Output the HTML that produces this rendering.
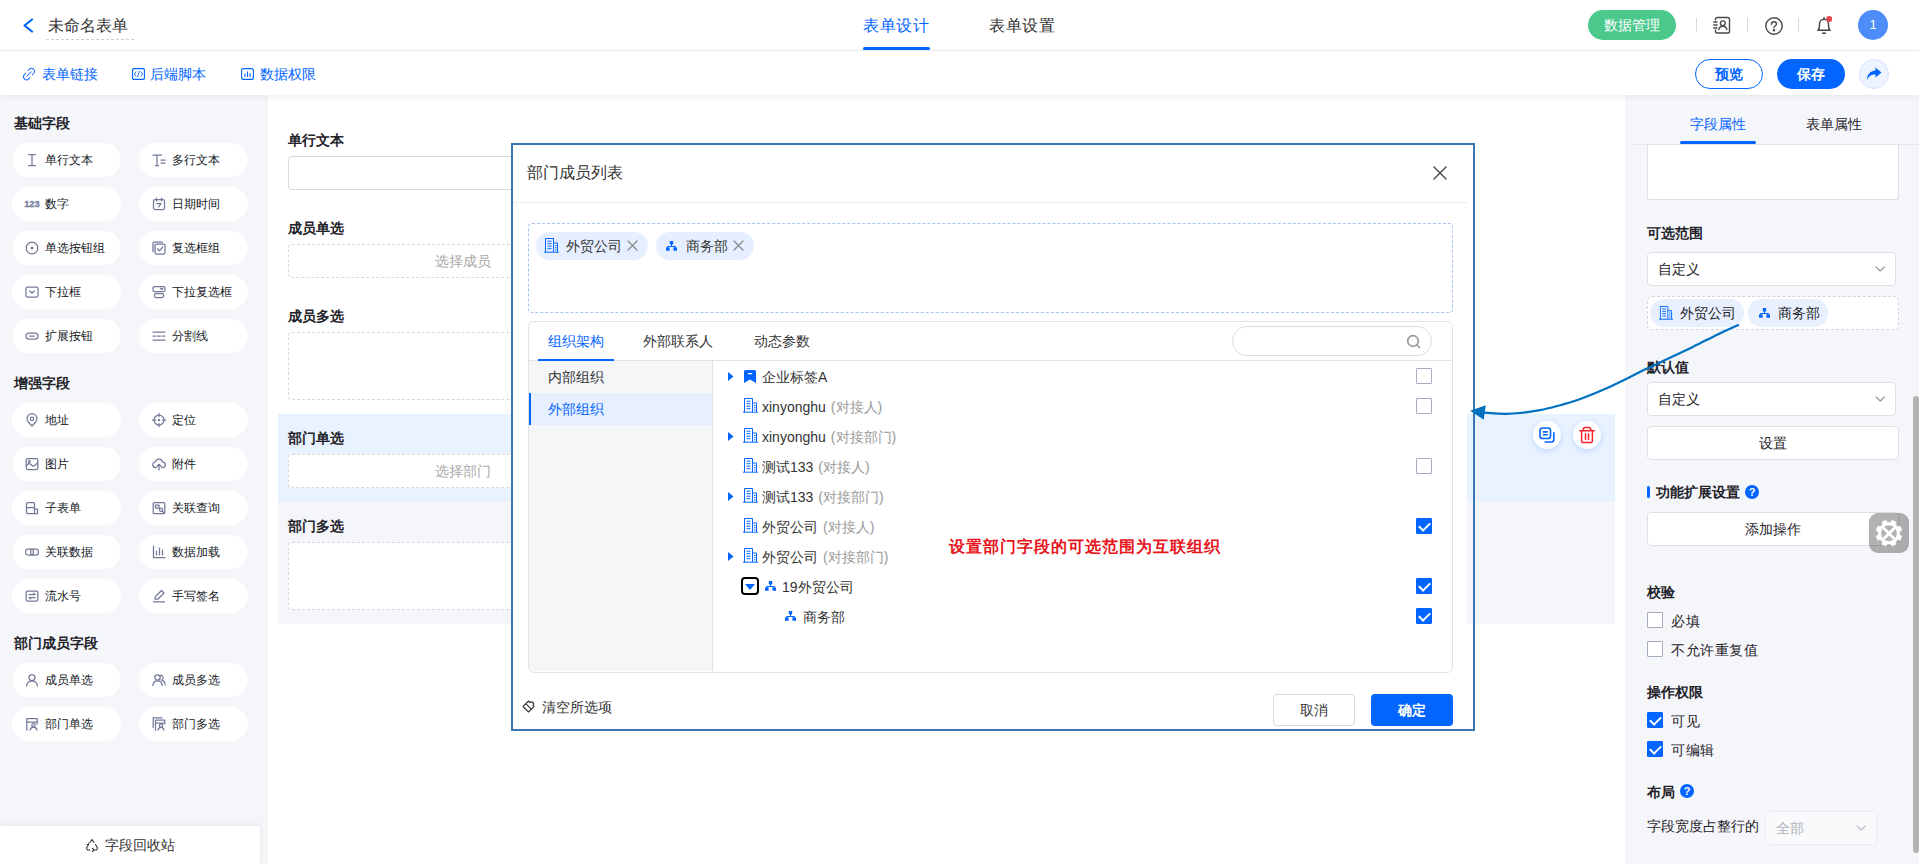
<!DOCTYPE html>
<html lang="zh">
<head>
<meta charset="utf-8">
<title>form designer</title>
<style>
*{box-sizing:border-box;margin:0;padding:0}
html,body{width:1919px;height:864px;overflow:hidden;background:#fff}
body{font-family:"Liberation Sans",sans-serif;font-size:14px;color:#333;position:relative}
.abs{position:absolute}
.t{position:absolute;white-space:nowrap;line-height:20px;height:20px}
.b{font-weight:bold}
.blue{color:#0265ff}
svg{position:absolute;overflow:visible}
/* top bars */
#top{left:0;top:0;width:1919px;height:51px;background:#fff;border-bottom:1px solid #ebecee}
#sub{left:0;top:51px;width:1919px;height:44px;background:#fff;box-shadow:0 2px 6px rgba(0,0,0,.06);z-index:3}
/* sidebar */
#side{left:0;top:95px;width:268px;height:769px;background:#f5f6fa}
.pill{position:absolute;width:109px;height:34px;border-radius:17px;background:#fff;font-size:12px;line-height:34px;padding-left:33px;color:#15181d;white-space:nowrap}
.pill svg{left:13px;top:10px;width:14px;height:14px;stroke:#737999;fill:none;stroke-width:1.25}
.sec{position:absolute;left:14px;font-weight:bold;font-size:14px;color:#1f2329;line-height:20px;white-space:nowrap}
#recycle{left:0;top:826px;width:260px;height:38px;background:#fff;box-shadow:0 -1px 6px rgba(0,0,0,.08)}
/* center */
#center{left:268px;top:95px;width:1357px;height:769px;background:#fff}
.flabel{position:absolute;left:288px;font-weight:bold;font-size:14px;line-height:20px;color:#1f2329;white-space:nowrap}
.fbox{position:absolute;left:288px;width:1317px;border:1px dashed #d9d9d9;border-radius:4px;background:#fff}
/* right */
#right{left:1625px;top:95px;width:294px;height:769px;background:#f5f6fa}
.rlabel{position:absolute;left:1647px;font-weight:bold;font-size:14px;line-height:20px;color:#1f2329;white-space:nowrap}
.rsel{position:absolute;background:#fff;border:1px solid #dcdfe6;border-radius:4px}
.cb{position:absolute;width:16px;height:16px;border:1px solid #a6abbd;border-radius:1px;background:#fff}
.cb.on{background:#0265ff;border-color:#0265ff}
.cb.on:after{content:"";position:absolute;left:4px;top:1px;width:5px;height:9px;border:solid #fff;border-width:0 2px 2px 0;transform:rotate(45deg)}
/* modal */
#modal{left:512px;top:144px;width:955px;height:586px;background:#fff;z-index:10}
#anno{left:511px;top:143px;width:964px;height:588px;border:2px solid #3b76b3;z-index:12}
.z11{z-index:11}
.row{position:absolute;font-size:14px;line-height:20px;height:20px;white-space:nowrap;color:#333}
.gray{color:#999}
.j{display:inline-block;white-space:nowrap;text-align:justify;text-align-last:justify}
</style>
</head>
<body>
<div id="top" class="abs">
  <svg style="left:22px;top:18px" width="12" height="15" viewBox="0 0 12 15"><path d="M10 1.500 L2.500 7.500 L10 13.500" fill="none" stroke="#0265ff" stroke-width="2.2" stroke-linecap="round" stroke-linejoin="round"/></svg>
  <div class="t" style="left:48px;top:16px;font-size:16px;color:#333"><span class="j" style="width:80px">未命名表单</span></div>
  <div class="abs" style="left:46px;top:39px;width:88px;height:0;border-top:1px dashed #d0d0d0"></div>
  <div class="t blue" style="left:863px;top:15px;font-size:16.4px"><span class="j" style="width:65.6px">表单设计</span></div>
  <div class="abs" style="left:863px;top:47px;width:67px;height:3px;border-radius:2px;background:#0265ff"></div>
  <div class="t" style="left:989px;top:15px;font-size:16.4px;color:#333"><span class="j" style="width:65.6px">表单设置</span></div>
  <div class="abs" style="left:1588px;top:10px;width:88px;height:30px;border-radius:15px;background:#4bc98d;color:#fff;font-size:14px;line-height:30px;text-align:center"><span class="j" style="width:56px">数据管理</span></div>
  <div class="abs" style="left:1696px;top:18px;width:1px;height:14px;background:#d8d8d8"></div>
  <div class="abs" style="left:1747px;top:18px;width:1px;height:14px;background:#d8d8d8"></div>
  <div class="abs" style="left:1798px;top:18px;width:1px;height:14px;background:#d8d8d8"></div>
  <!-- contacts icon -->
  <svg style="left:1713px;top:16px" width="18" height="18" viewBox="0 0 18 18" fill="none" stroke="#4a4a4a" stroke-width="1.400" stroke-linecap="round"><rect x="2.500" y="1.500" width="14" height="15.500" rx="1.800"/><circle cx="9.800" cy="7.300" r="2.400"/><path d="M5.800 13.500c.4-2.200 1.900-3.300 4-3.300s3.600 1.100 4 3.300"/><path d="M.8 6h3M.8 9h3M.8 12h3" stroke="#fff" stroke-width="3.200"/><path d="M.8 6h3.200M.8 9h3.200M.8 12h3.200"/></svg>
  <!-- help -->
  <svg style="left:1765px;top:17px" width="18" height="18" viewBox="0 0 18 18" fill="none" stroke="#4a4a4a" stroke-width="1.400" stroke-linecap="round"><circle cx="9" cy="9" r="8.200"/><path d="M6.500 7.200c0-1.500 1.100-2.400 2.500-2.400s2.500.9 2.500 2.200c0 1.800-2.500 1.800-2.500 3.800"/><circle cx="9" cy="13.200" r=".6" fill="#4a4a4a"/></svg>
  <!-- bell -->
  <svg style="left:1815px;top:16px" width="18" height="19" viewBox="0 0 18 19" fill="none" stroke="#444" stroke-width="1.400" stroke-linecap="round" stroke-linejoin="round"><path d="M2.800 14.300c1.300-1 1.700-2.200 1.700-4.300V8.300c0-2.800 1.900-5 4.500-5s4.500 2.200 4.500 5V10c0 2.100.4 3.300 1.700 4.300zM7.500 17.200h3M9 1.500v1.500"/><circle cx="14.200" cy="3" r="3" fill="#e5484d" stroke="none"/></svg>
  <div class="abs" style="left:1858px;top:10px;width:30px;height:30px;border-radius:15px;background:#4e8cf7;color:#fff;font-size:13px;line-height:30px;text-align:center">1</div>
</div>
<div id="sub" class="abs">
  <svg style="left:22px;top:16px" width="14" height="14" viewBox="0 0 14 14" fill="none" stroke="#1a6dff" stroke-width="1.050" stroke-linecap="round"><path d="M6 3.500l1.300-1.300a3 3 0 0 1 4.300 4.300L10.300 7.800M8 10.500l-1.300 1.300a3 3 0 0 1-4.300-4.300L3.700 6.200M5 9l4-4"/></svg>
  <div class="t blue" style="left:42px;top:13px"><span class="j" style="width:56px">表单链接</span></div>
  <svg style="left:132px;top:17px" width="13" height="12" viewBox="0 0 13 12" fill="none" stroke="#0265ff" stroke-width="1.1" stroke-linejoin="round"><rect x=".6" y=".6" width="11.800" height="10.800" rx="1.2"/><path d="M4.300 3.500L2.300 6l2 2.500M8.700 3.500l2 2.500-2 2.500M7.400 2.800L5.600 9.200" stroke-width=".9"/></svg>
  <div class="t blue" style="left:150px;top:13px"><span class="j" style="width:56px">后端脚本</span></div>
  <svg style="left:241px;top:17px" width="13" height="12" viewBox="0 0 13 12" fill="none" stroke="#0265ff" stroke-width="1.1" stroke-linecap="round"><rect x=".6" y=".6" width="11.800" height="10.800" rx="2"/><path d="M4 8.500V6M6.500 8.500V3.800M9 8.500V5.500"/></svg>
  <div class="t blue" style="left:260px;top:13px"><span class="j" style="width:56px">数据权限</span></div>
  <div class="abs blue" style="left:1695px;top:8px;width:68px;height:30px;border-radius:15px;border:1px solid #0265ff;font-size:14px;line-height:28px;text-align:center;font-weight:bold"><span class="j" style="width:28px">预览</span></div>
  <div class="abs" style="left:1777px;top:8px;width:68px;height:30px;border-radius:15px;background:#0265ff;color:#fff;font-size:14px;line-height:30px;text-align:center;font-weight:bold"><span class="j" style="width:28px">保存</span></div>
  <div class="abs" style="left:1859px;top:8px;width:30px;height:30px;border-radius:15px;background:#edf4ff;border:1px solid #d6e4ff"></div>
  <svg style="left:1866px;top:16px" width="16" height="14" viewBox="0 0 16 14"><path d="M9.500 0.500L15.500 5.500 9.500 10.500V7.500C5.500 7.300 2.800 8.800 1 13 1 7.500 4 4 9.500 3.500Z" fill="#0265ff"/></svg>
</div>
<!--SIDE_START-->
<div id="side" class="abs"></div>
<div class="sec" style="top:113px"><span class="j" style="width:56px">基础字段</span></div>
<div class="pill" style="left:12px;top:143px"><svg viewBox="0 0 14 14" stroke-linecap="round" stroke-linejoin="round"><path d="M3.500 1.500h7M7 1.500v11M3.500 12.500h7"/></svg><span class="j" style="width:48px">单行文本</span></div>
<div class="pill" style="left:139px;top:143px"><svg viewBox="0 0 14 14" stroke-linecap="round" stroke-linejoin="round"><path d="M1 2h8.500M5 2v10.500M3.500 12.500h3M9 7h4M9 10h4"/></svg><span class="j" style="width:48px">多行文本</span></div>
<div class="pill" style="left:12px;top:187px"><svg viewBox="0 0 14 14" stroke-linecap="round" stroke-linejoin="round"><text x="-0.800" y="10" font-size="9.300" font-weight="bold" fill="#7a80a0" stroke="#7a80a0" stroke-width=".35" font-family="Liberation Sans,sans-serif">123</text></svg><span class="j" style="width:24px">数字</span></div>
<div class="pill" style="left:139px;top:187px"><svg viewBox="0 0 14 14" stroke-linecap="round" stroke-linejoin="round"><rect x="1.500" y="2.500" width="11" height="10" rx="1.500"/><path d="M4.500 1v3M9.500 1v3M4.800 6.500H9L6.800 10"/></svg><span class="j" style="width:48px">日期时间</span></div>
<div class="pill" style="left:12px;top:231px"><svg viewBox="0 0 14 14" stroke-linecap="round" stroke-linejoin="round"><circle cx="7" cy="7" r="5.800"/><circle cx="7" cy="7" r="1.500" fill="#7a80a0" stroke="none"/></svg><span class="j" style="width:60px">单选按钮组</span></div>
<div class="pill" style="left:139px;top:231px"><svg viewBox="0 0 14 14" stroke-linecap="round" stroke-linejoin="round"><rect x="3" y="3" width="10" height="10" rx="1.200"/><path d="M1 10.500V2.200C1 1.500 1.500 1 2.200 1H10.500M5.500 7.800l2 2 3.300-3.800"/></svg><span class="j" style="width:48px">复选框组</span></div>
<div class="pill" style="left:12px;top:275px"><svg viewBox="0 0 14 14" stroke-linecap="round" stroke-linejoin="round"><rect x="1" y="2" width="12" height="10" rx="1.200"/><path d="M4.800 6l2.200 2.200L9.200 6"/></svg><span class="j" style="width:36px">下拉框</span></div>
<div class="pill" style="left:139px;top:275px"><svg viewBox="0 0 14 14" stroke-linecap="round" stroke-linejoin="round"><rect x="1" y="1.500" width="12" height="5" rx="1.200"/><path d="M8.500 3.300l1.200 1.200 1.200-1.200"/><rect x="2.500" y="8.500" width="9" height="4" rx="1.200"/></svg><span class="j" style="width:60px">下拉复选框</span></div>
<div class="pill" style="left:12px;top:319px"><svg viewBox="0 0 14 14" stroke-linecap="round" stroke-linejoin="round"><rect x="1" y="4" width="12" height="6" rx="3"/><path d="M4.500 7h5"/></svg><span class="j" style="width:48px">扩展按钮</span></div>
<div class="pill" style="left:139px;top:319px"><svg viewBox="0 0 14 14" stroke-linecap="round" stroke-linejoin="round"><path d="M1 3h12M1 11h12M1 7h2.500M5.300 7h3.400M10.500 7H13"/></svg><span class="j" style="width:36px">分割线</span></div>
<div class="sec" style="top:373px"><span class="j" style="width:56px">增强字段</span></div>
<div class="pill" style="left:12px;top:403px"><svg viewBox="0 0 14 14" stroke-linecap="round" stroke-linejoin="round"><path d="M7 13C3.500 9.500 2 7.700 2 5.700a5 5 0 0 1 10 0c0 2-1.500 3.800-5 7.300z"/><circle cx="7" cy="5.800" r="1.700"/></svg><span class="j" style="width:24px">地址</span></div>
<div class="pill" style="left:139px;top:403px"><svg viewBox="0 0 14 14" stroke-linecap="round" stroke-linejoin="round"><circle cx="7" cy="7" r="5"/><circle cx="7" cy="7" r="1.300" fill="#7a80a0" stroke="none"/><path d="M7 .5v3M7 10.500v3M.5 7h3M10.500 7h3"/></svg><span class="j" style="width:24px">定位</span></div>
<div class="pill" style="left:12px;top:447px"><svg viewBox="0 0 14 14" stroke-linecap="round" stroke-linejoin="round"><rect x="1.200" y="1.500" width="11.600" height="11" rx="1.500"/><path d="M1.500 8.500c2-2.500 3.300-2.500 5-.5s3 1.500 6-2.500"/><circle cx="4.300" cy="4.500" r=".9"/></svg><span class="j" style="width:24px">图片</span></div>
<div class="pill" style="left:139px;top:447px"><svg viewBox="0 0 14 14" stroke-linecap="round" stroke-linejoin="round"><path d="M4.500 10.500H3.800a2.800 2.800 0 0 1-.4-5.600 3.800 3.800 0 0 1 7.400.2 2.700 2.700 0 0 1-.3 5.400H9.500M7 13V7.500M5 9.300l2-2 2 2"/></svg><span class="j" style="width:24px">附件</span></div>
<div class="pill" style="left:12px;top:491px"><svg viewBox="0 0 14 14" stroke-linecap="round" stroke-linejoin="round"><rect x="1.500" y="1.500" width="8" height="11" rx="1"/><path d="M1.500 6.500h8M9.500 8h3v4.500h-3"/></svg><span class="j" style="width:36px">子表单</span></div>
<div class="pill" style="left:139px;top:491px"><svg viewBox="0 0 14 14" stroke-linecap="round" stroke-linejoin="round"><rect x="1.200" y="1.500" width="11.600" height="11" rx="1"/><rect x="3.500" y="4" width="3.500" height="3"/><circle cx="9" cy="8.800" r="1.600"/><path d="M10.200 10l1.500 1.500"/></svg><span class="j" style="width:48px">关联查询</span></div>
<div class="pill" style="left:12px;top:535px"><svg viewBox="0 0 14 14" stroke-linecap="round" stroke-linejoin="round"><rect x=".8" y="4" width="7.500" height="6" rx="2"/><rect x="5.700" y="4" width="7.500" height="6" rx="2"/></svg><span class="j" style="width:48px">关联数据</span></div>
<div class="pill" style="left:139px;top:535px"><svg viewBox="0 0 14 14" stroke-linecap="round" stroke-linejoin="round"><path d="M1.500 1v11.500H13M4.500 10V6M7.500 10V3M10.500 10V5"/></svg><span class="j" style="width:48px">数据加载</span></div>
<div class="pill" style="left:12px;top:579px"><svg viewBox="0 0 14 14" stroke-linecap="round" stroke-linejoin="round"><rect x="1.200" y="2" width="11.600" height="10" rx="1"/><path d="M4 5.500h6l-1.500-1.300M10 8.500H4l1.500 1.300"/></svg><span class="j" style="width:36px">流水号</span></div>
<div class="pill" style="left:139px;top:579px"><svg viewBox="0 0 14 14" stroke-linecap="round" stroke-linejoin="round"><path d="M3 10l.5-2.500L9.500 1.500l2.500 2.500L6 10zM1.500 12.800h11"/></svg><span class="j" style="width:48px">手写签名</span></div>
<div class="sec" style="top:633px"><span class="j" style="width:84px">部门成员字段</span></div>
<div class="pill" style="left:12px;top:663px"><svg viewBox="0 0 14 14" stroke-linecap="round" stroke-linejoin="round"><circle cx="7" cy="4.500" r="3"/><path d="M1.500 13c.3-3.300 2.500-5 5.500-5s5.200 1.700 5.500 5"/></svg><span class="j" style="width:48px">成员单选</span></div>
<div class="pill" style="left:139px;top:663px"><svg viewBox="0 0 14 14" stroke-linecap="round" stroke-linejoin="round"><circle cx="5.500" cy="4.500" r="2.700"/><path d="M.8 12.500c.3-3 2-4.700 4.700-4.700s4.400 1.700 4.700 4.700M8.500 2.200a2.600 2.600 0 0 1 1 5c1.800.3 3.300 1.800 3.600 4.500"/></svg><span class="j" style="width:48px">成员多选</span></div>
<div class="pill" style="left:12px;top:707px"><svg viewBox="0 0 14 14" stroke-linecap="round" stroke-linejoin="round"><path d="M1.800 13V1.500h10.400V7M1.800 5h10.400"/><circle cx="8.500" cy="8.300" r="1.700"/><path d="M5 13c.5-2 1.700-3 3.500-3s3 1 3.500 3"/></svg><span class="j" style="width:48px">部门单选</span></div>
<div class="pill" style="left:139px;top:707px"><svg viewBox="0 0 14 14" stroke-linecap="round" stroke-linejoin="round"><path d="M3.500 13V3h9.300v4M3.500 6h9.300M1.200 10.500V.8H10"/><circle cx="9" cy="8.800" r="1.600"/><path d="M6 13c.4-1.800 1.500-2.600 3-2.600s2.600.8 3 2.600"/></svg><span class="j" style="width:48px">部门多选</span></div>
<div id="recycle" class="abs"><svg style="left:85px;top:12px" width="14" height="14" viewBox="0 0 14 14" fill="none" stroke="#333" stroke-width="1.100" stroke-linecap="round" stroke-linejoin="round"><path d="M5 4.500L7 1.500l2 3M10.500 6.500l2 3.500-1 2H9M5 12H2.500l-1-2 2-3.500M7.500 10.500L9 12l-1.500 1.500M2 6.500l1.500.2.300-1.600"/></svg><div class="t" style="left:105px;top:9px;color:#333"><span class="j" style="width:70px">字段回收站</span></div></div>
<!--SIDE_END-->
<div id="center" class="abs"></div>
<div class="abs" style="left:278px;top:414px;width:1337px;height:88px;background:#e9f2ff"></div>
<div class="abs" style="left:278px;top:502px;width:1337px;height:122px;background:#f5f6fa"></div>
<div class="flabel" style="top:130px"><span class="j" style="width:56px">单行文本</span></div>
<div class="fbox" style="top:156px;height:34px;width:350px;border-style:solid"></div>
<div class="flabel" style="top:218px"><span class="j" style="width:56px">成员单选</span></div>
<div class="fbox" style="top:244px;height:34px;width:350px"></div>
<div class="t" style="left:435px;top:251px;color:#aaa"><span class="j" style="width:56px">选择成员</span></div>
<div class="flabel" style="top:306px"><span class="j" style="width:56px">成员多选</span></div>
<div class="fbox" style="top:332px;height:68px;width:350px"></div>
<div class="flabel" style="top:428px"><span class="j" style="width:56px">部门单选</span></div>
<div class="fbox" style="top:454px;height:34px;width:350px"></div>
<div class="t" style="left:435px;top:461px;color:#aaa"><span class="j" style="width:56px">选择部门</span></div>
<div class="flabel" style="top:516px"><span class="j" style="width:56px">部门多选</span></div>
<div class="fbox" style="top:542px;height:68px;width:350px"></div>
<!-- copy / delete -->
<div class="abs" style="left:1533px;top:421px;width:28px;height:28px;border-radius:14px;background:#fff;box-shadow:0 2px 6px rgba(2,101,255,.18)"></div>
<svg style="left:1539px;top:427px" width="16" height="16" viewBox="0 0 16 16" fill="none" stroke="#0265ff" stroke-width="1.600" stroke-linejoin="round" stroke-linecap="round"><rect x="1" y="1" width="10.500" height="10.500" rx="2.600"/><path d="M4.400 4.900h3.800M4.400 7.800h3.800M14.800 5.800v6.700a2.500 2.500 0 0 1-2.500 2.500H6.200"/></svg>
<div class="abs" style="left:1573px;top:421px;width:28px;height:28px;border-radius:14px;background:#fff;box-shadow:0 2px 6px rgba(2,101,255,.18)"></div>
<svg style="left:1579px;top:426px" width="16" height="18" viewBox="0 0 16 18" fill="none" stroke="#f5222d" stroke-width="1.500" stroke-linejoin="round" stroke-linecap="round"><path d="M.8 4.800h14.400M4.300 4.500V3.500a2 2 0 0 1 2-2h3.400a2 2 0 0 1 2 2v1M2.600 5.200V15a1.500 1.500 0 0 0 1.500 1.500h7.800a1.500 1.500 0 0 0 1.500-1.500V5.200M6.500 7.800v5.700M9.500 7.800v5.700"/></svg>

<div id="right" class="abs"></div>
<div class="t blue" style="left:1690px;top:114px"><span class="j" style="width:56px">字段属性</span></div>
<div class="t" style="left:1806px;top:114px;color:#1f2329"><span class="j" style="width:56px">表单属性</span></div>
<div class="abs" style="left:1633px;top:144px;width:286px;height:1px;background:#e3e5ea"></div>
<div class="abs" style="left:1680px;top:141px;width:76px;height:3px;border-radius:2px;background:#0265ff"></div>
<div class="abs" style="left:1647px;top:145px;width:252px;height:55px;background:#fff;border:1px solid #dcdfe6;border-top:none;border-radius:0 0 3px 3px"></div>
<div class="rlabel" style="top:223px"><span class="j" style="width:56px">可选范围</span></div>
<div class="rsel" style="left:1647px;top:252px;width:249px;height:34px"></div>
<div class="t" style="left:1658px;top:259px;color:#1f2329"><span class="j" style="width:42px">自定义</span></div>
<svg style="left:1874px;top:265px" width="12" height="8" viewBox="0 0 12 8" fill="none" stroke="#8c8f9c" stroke-width="1.100" stroke-linecap="round" stroke-linejoin="round"><path d="M2 1.800L6.200 6l4.200-4.200"/></svg>
<div class="abs" style="left:1647px;top:296px;width:252px;height:34px;border:1px dashed #d4d4d4;border-radius:5px;background:#fff"></div>
<div class="abs" style="left:1650px;top:299px;width:94px;height:28px;border-radius:14px;background:#e8effe"></div>
<div class="abs" style="left:1748px;top:299px;width:80px;height:28px;border-radius:14px;background:#e8effe"></div>
<svg class="ibuild" style="left:1659px;top:306px" width="14" height="14" viewBox="0 0 15 15" fill="none" stroke="#0265ff" stroke-width="1"><path d="M1.500 14V.5h8V14M9.500 5h4V14M0 14.200h15M3.500 3.200h4M3.500 5.700h4M3.500 8.200h4M3.500 10.700h4M11 7.500h1.500M11 9.700h1.500M11 11.900h1.500"/></svg>
<div class="t" style="left:1680px;top:303px;color:#1f2329"><span class="j" style="width:56px">外贸公司</span></div>
<svg style="left:1759px;top:308px" width="11" height="10" viewBox="0 0 11 10" fill="#0265ff"><rect x="3.800" y="0" width="3.400" height="3.400" rx=".6"/><rect x="0" y="6.200" width="3.600" height="3.600" rx=".6"/><rect x="7.400" y="6.200" width="3.600" height="3.600" rx=".6"/><path d="M5 3h1v2H9.700v1.500h-1V6H2.300v.5h-1V5H5z"/></svg>
<div class="t" style="left:1778px;top:303px;color:#1f2329"><span class="j" style="width:42px">商务部</span></div>
<div class="rlabel" style="top:357px"><span class="j" style="width:42px">默认值</span></div>
<div class="rsel" style="left:1647px;top:382px;width:249px;height:34px"></div>
<div class="t" style="left:1658px;top:389px;color:#1f2329"><span class="j" style="width:42px">自定义</span></div>
<svg style="left:1874px;top:395px" width="12" height="8" viewBox="0 0 12 8" fill="none" stroke="#8c8f9c" stroke-width="1.100" stroke-linecap="round" stroke-linejoin="round"><path d="M2 1.800L6.200 6l4.200-4.200"/></svg>
<div class="rsel" style="left:1647px;top:426px;width:252px;height:34px;text-align:center;line-height:32px;color:#1f2329"><span class="j" style="width:28px">设置</span></div>
<div class="abs" style="left:1647px;top:486px;width:3px;height:12px;border-radius:2px;background:#0265ff"></div>
<div class="rlabel" style="left:1656px;top:482px"><span class="j" style="width:84px">功能扩展设置</span></div>
<div class="abs b" style="left:1745px;top:485px;width:14px;height:14px;border-radius:7px;background:#0265ff;color:#fff;font-size:11px;line-height:14px;text-align:center">?</div>
<div class="rsel" style="left:1647px;top:512px;width:252px;height:34px;text-align:center;line-height:32px;color:#1f2329"><span class="j" style="width:56px">添加操作</span></div>
<div class="abs" style="left:1869px;top:513px;width:40px;height:40px;border-radius:9px;background:rgba(0,0,0,.3)"></div>
<svg style="left:1869px;top:513px" width="40" height="40" viewBox="0 0 40 40"><path d="M21.61 9.52L22.98 7.34L26.99 9.00L26.42 11.51L28.69 13.78L31.20 13.21L32.86 17.22L30.68 18.59L30.68 21.81L32.86 23.18L31.20 27.19L28.69 26.62L26.42 28.89L26.99 31.40L22.98 33.06L21.61 30.88L18.39 30.88L17.02 33.06L13.01 31.40L13.58 28.89L11.31 26.62L8.80 27.19L7.14 23.18L9.32 21.81L9.32 18.59L7.14 17.22L8.80 13.21L11.31 13.78L13.58 11.51L13.01 9.00L17.02 7.34L18.39 9.52ZM20 12a8.200 8.200 0 1 0 0 16.400a8.200 8.200 0 1 0 0-16.400Z" fill="#fff" fill-rule="evenodd" stroke="#fff" stroke-width=".6" stroke-linejoin="round"/><path d="M15 15.500L24.500 25M25 15.500L15.500 25" stroke="#fff" stroke-width="2.900" stroke-linecap="round"/></svg>
<div class="rlabel" style="top:582px"><span class="j" style="width:28px">校验</span></div>
<div class="cb" style="left:1647px;top:612px"></div><div class="t" style="left:1671px;top:611px;color:#1f2329;letter-spacing:.6px"><span class="j" style="width:29.2px">必填</span></div>
<div class="cb" style="left:1647px;top:641px"></div><div class="t" style="left:1671px;top:640px;color:#1f2329;letter-spacing:.6px"><span class="j" style="width:87.6px">不允许重复值</span></div>
<div class="rlabel" style="top:682px"><span class="j" style="width:56px">操作权限</span></div>
<div class="cb on" style="left:1647px;top:712px"></div><div class="t" style="left:1671px;top:711px;color:#1f2329;letter-spacing:.6px"><span class="j" style="width:29.2px">可见</span></div>
<div class="cb on" style="left:1647px;top:741px"></div><div class="t" style="left:1671px;top:740px;color:#1f2329;letter-spacing:.6px"><span class="j" style="width:43.8px">可编辑</span></div>
<div class="rlabel" style="top:782px"><span class="j" style="width:28px">布局</span></div>
<div class="abs b" style="left:1680px;top:784px;width:14px;height:14px;border-radius:7px;background:#0265ff;color:#fff;font-size:11px;line-height:14px;text-align:center">?</div>
<div class="t" style="left:1647px;top:816px;color:#1f2329"><span class="j" style="width:112px">字段宽度占整行的</span></div>
<div class="rsel" style="left:1765px;top:811px;width:112px;height:34px;background:#f9fafc;border-color:#ecedf1"></div>
<div class="t" style="left:1776px;top:818px;color:#b0b3ba"><span class="j" style="width:28px">全部</span></div>
<svg style="left:1855px;top:824px" width="12" height="8" viewBox="0 0 12 8" fill="none" stroke="#b8bac0" stroke-width="1.100" stroke-linecap="round" stroke-linejoin="round"><path d="M2 1.800L6.200 6l4.200-4.200"/></svg>
<div class="abs" style="left:1913px;top:396px;width:6px;height:457px;border-radius:3px;background:#b3b3b3"></div>
<!--MODAL_START-->
<div id="modal" class="abs"></div>
<div class="t z11" style="left:527px;top:163px;font-size:16px;color:#333"><span class="j" style="width:96px">部门成员列表</span></div>
<svg class="z11" style="left:1433px;top:166px" width="14" height="14" viewBox="0 0 14 14" stroke="#444" stroke-width="1.4" stroke-linecap="round"><path d="M1 1L13 13M13 1L1 13"/></svg>
<div class="abs z11" style="left:513px;top:202px;width:954px;height:1px;background:#ececec"></div>
<div class="abs z11" style="left:528px;top:223px;width:925px;height:90px;border:1px dashed #a9c3eb;border-radius:4px"></div>
<div class="abs z11" style="left:536px;top:232px;width:112px;height:28px;border-radius:14px;background:#e6efff"></div>
<svg class="z11" style="left:544px;top:238px" width="15" height="15" viewBox="0 0 15 15" fill="none" stroke="#0265ff" stroke-width="1"><path d="M1.500 14V.5h8V14M9.500 5h4V14M0 14.200h15M3.500 3.200h4M3.500 5.700h4M3.500 8.200h4M3.500 10.700h4M11 7.500h1.500M11 9.700h1.500M11 11.900h1.500"/></svg>
<div class="t z11" style="left:566px;top:236px;color:#333"><span class="j" style="width:56px">外贸公司</span></div>
<svg class="z11" style="left:627px;top:240px" width="11" height="11" viewBox="0 0 11 11" stroke="#888" stroke-width="1.2" stroke-linecap="round"><path d="M1 1L10 10M10 1L1 10"/></svg>
<div class="abs z11" style="left:656px;top:232px;width:98px;height:28px;border-radius:14px;background:#e6efff"></div>
<svg class="z11" style="left:666px;top:241px" width="11" height="10" viewBox="0 0 11 10" fill="#0265ff"><rect x="3.800" y="0" width="3.400" height="3.400" rx=".6"/><rect x="0" y="6.200" width="3.600" height="3.600" rx=".6"/><rect x="7.400" y="6.200" width="3.600" height="3.600" rx=".6"/><path d="M5 3h1v2H9.700v1.500h-1V6H2.300v.5h-1V5H5z"/></svg>
<div class="t z11" style="left:686px;top:236px;color:#333"><span class="j" style="width:42px">商务部</span></div>
<svg class="z11" style="left:733px;top:240px" width="11" height="11" viewBox="0 0 11 11" stroke="#888" stroke-width="1.2" stroke-linecap="round"><path d="M1 1L10 10M10 1L1 10"/></svg>
<div class="abs z11" style="left:528px;top:321px;width:925px;height:352px;border:1px solid #e2e2e2;border-radius:6px;overflow:hidden"><div class="abs" style="left:0;top:38px;width:923px;height:1px;background:#e2e2e2"></div><div class="abs" style="left:0;top:39px;width:183px;height:310px;background:#f5f6f8"></div><div class="abs" style="left:183px;top:39px;width:1px;height:310px;background:#e2e2e2"></div><div class="abs" style="left:0;top:71px;width:183px;height:32px;background:#e7f0ff"></div><div class="abs" style="left:0;top:71px;width:2px;height:32px;background:#0265ff"></div><div class="abs" style="left:9px;top:37px;width:76px;height:2px;background:#0265ff"></div></div>
<div class="t z11 blue" style="left:548px;top:331px"><span class="j" style="width:56px">组织架构</span></div>
<div class="t z11" style="left:643px;top:331px;color:#333"><span class="j" style="width:70px">外部联系人</span></div>
<div class="t z11" style="left:754px;top:331px;color:#333"><span class="j" style="width:56px">动态参数</span></div>
<div class="abs z11" style="left:1232px;top:326px;width:200px;height:30px;border:1px solid #dcdcdc;border-radius:15px;background:#fff"></div>
<svg class="z11" style="left:1406px;top:334px" width="15" height="15" viewBox="0 0 15 15" fill="none" stroke="#999" stroke-width="1.700" stroke-linecap="round"><circle cx="7" cy="7" r="5.300"/><path d="M11 11l2.500 2.500"/></svg>
<div class="t z11" style="left:548px;top:367px;color:#333"><span class="j" style="width:56px">内部组织</span></div>
<div class="t z11 blue" style="left:548px;top:399px"><span class="j" style="width:56px">外部组织</span></div>
<svg class="z11" style="left:728px;top:372px" width="5.500" height="9" viewBox="0 0 5.500 9"><path d="M0 0L5.500 4.500 0 9z" fill="#0265ff"/></svg>
<svg class="z11" style="left:744px;top:370px" width="12" height="13" viewBox="0 0 12 13"><path d="M0 1.500A1.500 1.500 0 0 1 1.500 0h9A1.500 1.500 0 0 1 12 1.500V13L6 9.500 0 13z" fill="#0265ff"/><rect x="3.800" y="3" width="4.400" height="1.300" rx=".6" fill="#fff"/></svg>
<div class="row z11" style="left:762px;top:367px"><span class="j" style="width:56px">企业标签</span>A</div>
<div class="cb z11 " style="left:1416px;top:368px"></div>
<svg class="z11" style="left:743px;top:398px" width="15" height="15" viewBox="0 0 15 15" fill="none" stroke="#0265ff" stroke-width="1"><path d="M1.500 14V.5h8V14M9.500 5h4V14M0 14.200h15M3.500 3.200h4M3.500 5.700h4M3.500 8.200h4M3.500 10.700h4M11 7.500h1.500M11 9.700h1.500M11 11.900h1.500"/></svg>
<div class="row z11" style="left:762px;top:397px">xinyonghu<span class="gray" style="margin-left:5px">(<span class="j" style="width:42px">对接人</span>)</span></div>
<div class="cb z11 " style="left:1416px;top:398px"></div>
<svg class="z11" style="left:728px;top:432px" width="5.500" height="9" viewBox="0 0 5.500 9"><path d="M0 0L5.500 4.500 0 9z" fill="#0265ff"/></svg>
<svg class="z11" style="left:743px;top:428px" width="15" height="15" viewBox="0 0 15 15" fill="none" stroke="#0265ff" stroke-width="1"><path d="M1.500 14V.5h8V14M9.500 5h4V14M0 14.200h15M3.500 3.200h4M3.500 5.700h4M3.500 8.200h4M3.500 10.700h4M11 7.500h1.500M11 9.700h1.500M11 11.900h1.500"/></svg>
<div class="row z11" style="left:762px;top:427px">xinyonghu<span class="gray" style="margin-left:5px">(<span class="j" style="width:56px">对接部门</span>)</span></div>
<svg class="z11" style="left:743px;top:458px" width="15" height="15" viewBox="0 0 15 15" fill="none" stroke="#0265ff" stroke-width="1"><path d="M1.500 14V.5h8V14M9.500 5h4V14M0 14.200h15M3.500 3.200h4M3.500 5.700h4M3.500 8.200h4M3.500 10.700h4M11 7.500h1.500M11 9.700h1.500M11 11.900h1.500"/></svg>
<div class="row z11" style="left:762px;top:457px"><span class="j" style="width:28px">测试</span>133<span class="gray" style="margin-left:5px">(<span class="j" style="width:42px">对接人</span>)</span></div>
<div class="cb z11 " style="left:1416px;top:458px"></div>
<svg class="z11" style="left:728px;top:492px" width="5.500" height="9" viewBox="0 0 5.500 9"><path d="M0 0L5.500 4.500 0 9z" fill="#0265ff"/></svg>
<svg class="z11" style="left:743px;top:488px" width="15" height="15" viewBox="0 0 15 15" fill="none" stroke="#0265ff" stroke-width="1"><path d="M1.500 14V.5h8V14M9.500 5h4V14M0 14.200h15M3.500 3.200h4M3.500 5.700h4M3.500 8.200h4M3.500 10.700h4M11 7.500h1.500M11 9.700h1.500M11 11.900h1.500"/></svg>
<div class="row z11" style="left:762px;top:487px"><span class="j" style="width:28px">测试</span>133<span class="gray" style="margin-left:5px">(<span class="j" style="width:56px">对接部门</span>)</span></div>
<svg class="z11" style="left:743px;top:518px" width="15" height="15" viewBox="0 0 15 15" fill="none" stroke="#0265ff" stroke-width="1"><path d="M1.500 14V.5h8V14M9.500 5h4V14M0 14.200h15M3.500 3.200h4M3.500 5.700h4M3.500 8.200h4M3.500 10.700h4M11 7.500h1.500M11 9.700h1.500M11 11.900h1.500"/></svg>
<div class="row z11" style="left:762px;top:517px"><span class="j" style="width:56px">外贸公司</span><span class="gray" style="margin-left:5px">(<span class="j" style="width:42px">对接人</span>)</span></div>
<div class="cb z11 on" style="left:1416px;top:518px"></div>
<svg class="z11" style="left:728px;top:552px" width="5.500" height="9" viewBox="0 0 5.500 9"><path d="M0 0L5.500 4.500 0 9z" fill="#0265ff"/></svg>
<svg class="z11" style="left:743px;top:548px" width="15" height="15" viewBox="0 0 15 15" fill="none" stroke="#0265ff" stroke-width="1"><path d="M1.500 14V.5h8V14M9.500 5h4V14M0 14.200h15M3.500 3.200h4M3.500 5.700h4M3.500 8.200h4M3.500 10.700h4M11 7.500h1.500M11 9.700h1.500M11 11.900h1.500"/></svg>
<div class="row z11" style="left:762px;top:547px"><span class="j" style="width:56px">外贸公司</span><span class="gray" style="margin-left:5px">(<span class="j" style="width:56px">对接部门</span>)</span></div>
<div class="abs z11" style="left:741px;top:577px;width:18px;height:18px;border:2px solid #000;border-radius:4px;background:#fff"></div>
<svg class="z11" style="left:745px;top:584px" width="10" height="6" viewBox="0 0 10 6"><path d="M0 0h10L5 6z" fill="#0265ff"/></svg>
<svg class="z11" style="left:765px;top:581px" width="11" height="10" viewBox="0 0 11 10" fill="#0265ff"><rect x="3.800" y="0" width="3.400" height="3.400" rx=".6"/><rect x="0" y="6.200" width="3.600" height="3.600" rx=".6"/><rect x="7.400" y="6.200" width="3.600" height="3.600" rx=".6"/><path d="M5 3h1v2H9.700v1.500h-1V6H2.300v.5h-1V5H5z"/></svg>
<div class="row z11" style="left:782px;top:577px">19<span class="j" style="width:56px">外贸公司</span></div>
<div class="cb z11 on" style="left:1416px;top:578px"></div>
<svg class="z11" style="left:785px;top:611px" width="11" height="10" viewBox="0 0 11 10" fill="#0265ff"><rect x="3.800" y="0" width="3.400" height="3.400" rx=".6"/><rect x="0" y="6.200" width="3.600" height="3.600" rx=".6"/><rect x="7.400" y="6.200" width="3.600" height="3.600" rx=".6"/><path d="M5 3h1v2H9.700v1.500h-1V6H2.300v.5h-1V5H5z"/></svg>
<div class="row z11" style="left:803px;top:607px"><span class="j" style="width:42px">商务部</span></div>
<div class="cb z11 on" style="left:1416px;top:608px"></div>
<div class="t z11" style="left:949px;top:537px;font-weight:bold;font-size:16px;color:#e8141c"><span class="j" style="width:271px">设置部门字段的可选范围为互联组织</span></div>
<svg class="z11" style="left:522px;top:700px" width="13" height="13" viewBox="0 0 13 13" fill="none" stroke="#333" stroke-width="1.100" stroke-linejoin="round"><path d="M1 6.500L6.500 1l1.500 1.500a2 2 0 0 1 3 3L12 6.500 6.500 12zM4 3.800L9.500 9.300M3 8.500l2 2"/></svg>
<div class="t z11" style="left:542px;top:697px;color:#333"><span class="j" style="width:70px">清空所选项</span></div>
<div class="abs z11" style="left:1273px;top:694px;width:82px;height:32px;border:1px solid #d9d9d9;border-radius:4px;background:#fff;text-align:center;line-height:30px;color:#333"><span class="j" style="width:28px">取消</span></div>
<div class="abs z11" style="left:1371px;top:694px;width:82px;height:32px;border-radius:4px;background:#0265ff;text-align:center;line-height:32px;color:#fff;font-weight:bold"><span class="j" style="width:28px">确定</span></div>
<div id="anno" class="abs"></div>
<svg style="left:0;top:0;z-index:13" width="1919" height="864" viewBox="0 0 1919 864"><path d="M1739 324.8C1735.5 326.4 1725.9 330.5 1718.2 334.2C1710.5 337.9 1701.3 342.8 1692.8 346.9C1684.3 351.0 1674.9 355.4 1667.3 359C1659.7 362.6 1653.3 365.5 1646.9 368.6C1640.5 371.7 1636.3 374.0 1629.1 377.5C1621.9 381.0 1612.2 385.9 1603.7 389.6C1595.2 393.3 1585.6 397.2 1578.2 399.8C1570.8 402.4 1565.5 403.8 1559.1 405.5C1552.7 407.2 1546.5 408.9 1540 410.2C1533.5 411.4 1525.8 412.4 1520 413C1514.2 413.6 1511.0 413.9 1505 413.8C1499.0 413.7 1487.5 412.8 1484 412.6" fill="none" stroke="#0070c0" stroke-width="2.200"/><path d="M1470.200 410.800L1485.800 405.200L1483.700 419.800z" fill="#0070c0"/></svg>
<!--MODAL_END-->
</body>
</html>
